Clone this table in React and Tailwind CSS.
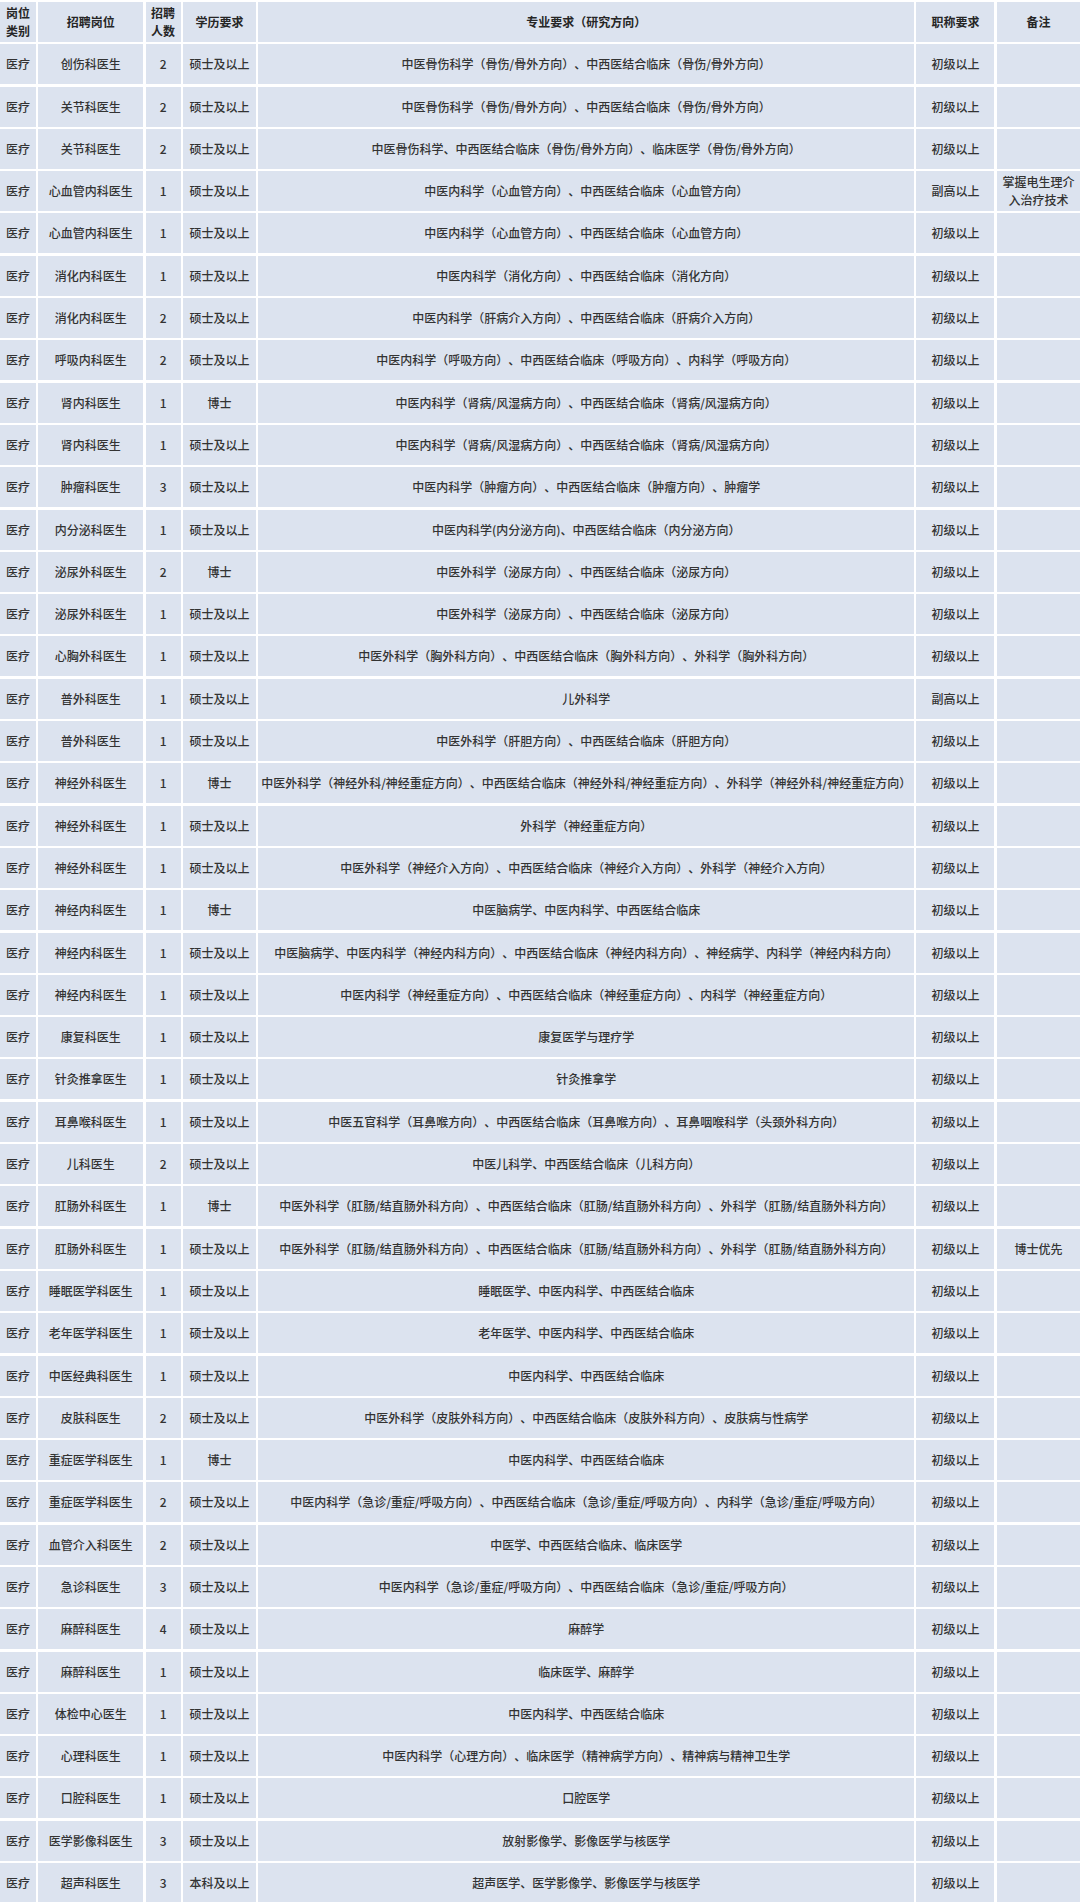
const rows = [
  ["创伤科医生", "2", "硕士及以上", "中医骨伤科学（骨伤/骨外方向）、中西医结合临床（骨伤/骨外方向）", "初级以上", ""],
  ["关节科医生", "2", "硕士及以上", "中医骨伤科学（骨伤/骨外方向）、中西医结合临床（骨伤/骨外方向）", "初级以上", ""],
  ["关节科医生", "2", "硕士及以上", "中医骨伤科学、中西医结合临床（骨伤/骨外方向）、临床医学（骨伤/骨外方向）", "初级以上", ""],
  ["心血管内科医生", "1", "硕士及以上", "中医内科学（心血管方向）、中西医结合临床（心血管方向）", "副高以上", "掌握电生理介入治疗技术"],
  ["心血管内科医生", "1", "硕士及以上", "中医内科学（心血管方向）、中西医结合临床（心血管方向）", "初级以上", ""],
  ["消化内科医生", "1", "硕士及以上", "中医内科学（消化方向）、中西医结合临床（消化方向）", "初级以上", ""],
  ["消化内科医生", "2", "硕士及以上", "中医内科学（肝病介入方向）、中西医结合临床（肝病介入方向）", "初级以上", ""],
  ["呼吸内科医生", "2", "硕士及以上", "中医内科学（呼吸方向）、中西医结合临床（呼吸方向）、内科学（呼吸方向）", "初级以上", ""],
  ["肾内科医生", "1", "博士", "中医内科学（肾病/风湿病方向）、中西医结合临床（肾病/风湿病方向）", "初级以上", ""],
  ["肾内科医生", "1", "硕士及以上", "中医内科学（肾病/风湿病方向）、中西医结合临床（肾病/风湿病方向）", "初级以上", ""],
  ["肿瘤科医生", "3", "硕士及以上", "中医内科学（肿瘤方向）、中西医结合临床（肿瘤方向）、肿瘤学", "初级以上", ""],
  ["内分泌科医生", "1", "硕士及以上", "中医内科学(内分泌方向)、中西医结合临床（内分泌方向）", "初级以上", ""],
  ["泌尿外科医生", "2", "博士", "中医外科学（泌尿方向）、中西医结合临床（泌尿方向）", "初级以上", ""],
  ["泌尿外科医生", "1", "硕士及以上", "中医外科学（泌尿方向）、中西医结合临床（泌尿方向）", "初级以上", ""],
  ["心胸外科医生", "1", "硕士及以上", "中医外科学（胸外科方向）、中西医结合临床（胸外科方向）、外科学（胸外科方向）", "初级以上", ""],
  ["普外科医生", "1", "硕士及以上", "儿外科学", "副高以上", ""],
  ["普外科医生", "1", "硕士及以上", "中医外科学（肝胆方向）、中西医结合临床（肝胆方向）", "初级以上", ""],
  ["神经外科医生", "1", "博士", "中医外科学（神经外科/神经重症方向）、中西医结合临床（神经外科/神经重症方向）、外科学（神经外科/神经重症方向）", "初级以上", ""],
  ["神经外科医生", "1", "硕士及以上", "外科学（神经重症方向）", "初级以上", ""],
  ["神经外科医生", "1", "硕士及以上", "中医外科学（神经介入方向）、中西医结合临床（神经介入方向）、外科学（神经介入方向）", "初级以上", ""],
  ["神经内科医生", "1", "博士", "中医脑病学、中医内科学、中西医结合临床", "初级以上", ""],
  ["神经内科医生", "1", "硕士及以上", "中医脑病学、中医内科学（神经内科方向）、中西医结合临床（神经内科方向）、神经病学、内科学（神经内科方向）", "初级以上", ""],
  ["神经内科医生", "1", "硕士及以上", "中医内科学（神经重症方向）、中西医结合临床（神经重症方向）、内科学（神经重症方向）", "初级以上", ""],
  ["康复科医生", "1", "硕士及以上", "康复医学与理疗学", "初级以上", ""],
  ["针灸推拿医生", "1", "硕士及以上", "针灸推拿学", "初级以上", ""],
  ["耳鼻喉科医生", "1", "硕士及以上", "中医五官科学（耳鼻喉方向）、中西医结合临床（耳鼻喉方向）、耳鼻咽喉科学（头颈外科方向）", "初级以上", ""],
  ["儿科医生", "2", "硕士及以上", "中医儿科学、中西医结合临床（儿科方向）", "初级以上", ""],
  ["肛肠外科医生", "1", "博士", "中医外科学（肛肠/结直肠外科方向）、中西医结合临床（肛肠/结直肠外科方向）、外科学（肛肠/结直肠外科方向）", "初级以上", ""],
  ["肛肠外科医生", "1", "硕士及以上", "中医外科学（肛肠/结直肠外科方向）、中西医结合临床（肛肠/结直肠外科方向）、外科学（肛肠/结直肠外科方向）", "初级以上", "博士优先"],
  ["睡眠医学科医生", "1", "硕士及以上", "睡眠医学、中医内科学、中西医结合临床", "初级以上", ""],
  ["老年医学科医生", "1", "硕士及以上", "老年医学、中医内科学、中西医结合临床", "初级以上", ""],
  ["中医经典科医生", "1", "硕士及以上", "中医内科学、中西医结合临床", "初级以上", ""],
  ["皮肤科医生", "2", "硕士及以上", "中医外科学（皮肤外科方向）、中西医结合临床（皮肤外科方向）、皮肤病与性病学", "初级以上", ""],
  ["重症医学科医生", "1", "博士", "中医内科学、中西医结合临床", "初级以上", ""],
  ["重症医学科医生", "2", "硕士及以上", "中医内科学（急诊/重症/呼吸方向）、中西医结合临床（急诊/重症/呼吸方向）、内科学（急诊/重症/呼吸方向）", "初级以上", ""],
  ["血管介入科医生", "2", "硕士及以上", "中医学、中西医结合临床、临床医学", "初级以上", ""],
  ["急诊科医生", "3", "硕士及以上", "中医内科学（急诊/重症/呼吸方向）、中西医结合临床（急诊/重症/呼吸方向）", "初级以上", ""],
  ["麻醉科医生", "4", "硕士及以上", "麻醉学", "初级以上", ""],
  ["麻醉科医生", "1", "硕士及以上", "临床医学、麻醉学", "初级以上", ""],
  ["体检中心医生", "1", "硕士及以上", "中医内科学、中西医结合临床", "初级以上", ""],
  ["心理科医生", "1", "硕士及以上", "中医内科学（心理方向）、临床医学（精神病学方向）、精神病与精神卫生学", "初级以上", ""],
  ["口腔科医生", "1", "硕士及以上", "口腔医学", "初级以上", ""],
  ["医学影像科医生", "3", "硕士及以上", "放射影像学、影像医学与核医学", "初级以上", ""],
  ["超声科医生", "3", "本科及以上", "超声医学、医学影像学、影像医学与核医学", "初级以上", ""],
];

function Cell({ children, head }) {
  return (
    <div
      className={
        "h-[40px] flex items-center justify-center text-center bg-[#dce3ef] " +
        (head ? "font-bold leading-[18px] text-[#262626]" : "font-medium text-[#333]")
      }
    >
      {children}
    </div>
  );
}

export default function App() {
  return (
    <div className="w-[1080px] h-[1902px] overflow-hidden bg-white pt-[2px] font-['Noto_Sans_CJK_SC','Noto_Sans',sans-serif] text-[12px] [text-spacing-trim:space-all]">
      <div className="grid grid-cols-[36px_105px_35px_73px_656px_78px_1fr] gap-[2.3px]">
        <Cell head>岗位<br />类别</Cell>
        <Cell head>招聘岗位</Cell>
        <Cell head>招聘<br />人数</Cell>
        <Cell head>学历要求</Cell>
        <Cell head>专业要求（研究方向）</Cell>
        <Cell head>职称要求</Cell>
        <Cell head>备注</Cell>
        {rows.map((r, i) => (
          <div key={i} className="contents">
            <Cell>医疗</Cell>
            <Cell>{r[0]}</Cell>
            <Cell>{r[1]}</Cell>
            <Cell>{r[2]}</Cell>
            <Cell>{r[3]}</Cell>
            <Cell>{r[4]}</Cell>
            <Cell>
              <span className="px-[2px] leading-[18px]">{r[5]}</span>
            </Cell>
          </div>
        ))}
      </div>
    </div>
  );
}
